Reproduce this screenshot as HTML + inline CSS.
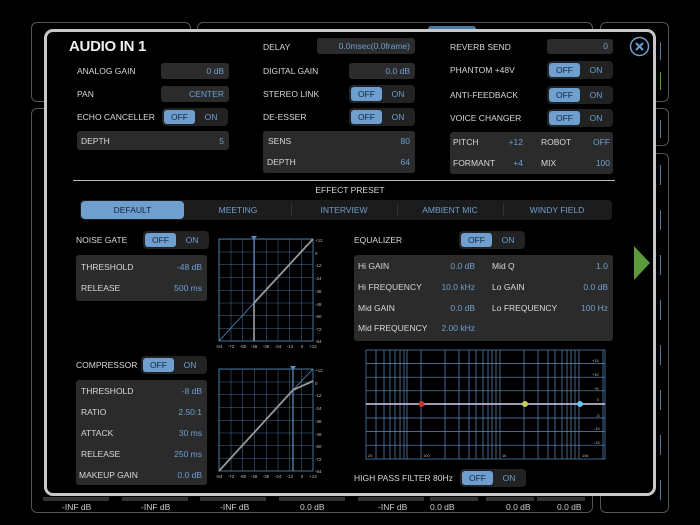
<!DOCTYPE html>
<html><head><meta charset="utf-8"><style>
*{margin:0;padding:0;box-sizing:border-box}
body{width:700px;height:525px;background:#000;position:relative;overflow:hidden;font-family:"Liberation Sans",sans-serif;color:#ddd;font-size:8.5px}
.a{position:absolute}
.lb{position:absolute;color:#d8d8d8;font-size:8.5px;line-height:10px;white-space:nowrap}
.bx{position:absolute;background:#2b2b2b;border-radius:3px;color:#6f9fd0;font-size:8.5px;text-align:right;padding-right:5px}
.v{position:absolute;color:#6f9fd0;font-size:8.5px;line-height:10px;white-space:nowrap;text-align:right}
.tg{position:absolute;background:#222;border-radius:4px;height:18px;width:66px}
.tg .off{position:absolute;left:2px;top:2px;width:31px;height:14px;background:#6e9fcf;border-radius:3px;color:#12263a;text-align:center;line-height:14px;font-size:8.5px}
.tg .on{position:absolute;right:2px;top:2px;width:30px;height:14px;color:#6f9fd0;text-align:center;line-height:14px;font-size:8.5px}
.pn{position:absolute;background:#2b2b2b;border-radius:3px}
.bg{position:absolute;border:1.5px solid #555;border-radius:6px}
.bar{position:absolute;top:497px;height:4px;background:#333}
</style></head><body>
<!-- background panels -->
<div class="bg" style="left:31px;top:22px;width:160px;height:80px"></div>
<div class="bg" style="left:197px;top:22px;width:396px;height:80px"></div>
<div class="a" style="left:428px;top:26px;width:48px;height:6px;background:#4a7aa5;border-radius:3px"></div>
<div class="bg" style="left:600px;top:22px;width:69px;height:80px"></div>
<div class="bg" style="left:600px;top:108px;width:69px;height:38px"></div>
<div class="bg" style="left:600px;top:153px;width:69px;height:360px"></div>
<div class="bg" style="left:31px;top:108px;width:562px;height:405px"></div>
<div class="a" style="left:660px;top:42px;width:1px;height:18px;background:#4d7a9e"></div>
<div class="a" style="left:660px;top:72px;width:1px;height:18px;background:#5a9a3a"></div>
<div class="a" style="left:660px;top:120px;width:1px;height:18px;background:#4d7a9e"></div>
<div class="a" style="left:660px;top:165px;width:1px;height:340px;background:repeating-linear-gradient(#4d7a9e 0 20px,transparent 20px 45px)"></div>
<div class="bar" style="left:43px;width:66px"></div>
<div class="bar" style="left:122px;width:66px"></div>
<div class="bar" style="left:200px;width:66px"></div>
<div class="bar" style="left:279px;width:66px"></div>
<div class="bar" style="left:358px;width:66px"></div>
<div class="bar" style="left:430px;width:48px"></div>
<div class="bar" style="left:486px;width:48px"></div>
<div class="bar" style="left:537px;width:48px"></div>
<div class="a" style="left:0;top:502px;width:600px;height:12px;color:#ccc;font-size:8.5px">
<span class="a" style="left:62px">-INF dB</span><span class="a" style="left:141px">-INF dB</span><span class="a" style="left:220px">-INF dB</span><span class="a" style="left:300px">0.0 dB</span><span class="a" style="left:378px">-INF dB</span><span class="a" style="left:430px">0.0 dB</span><span class="a" style="left:506px">0.0 dB</span><span class="a" style="left:557px">0.0 dB</span></div>
<!-- modal -->
<div class="a" style="left:44px;top:29px;width:612px;height:467px;background:#000;border:3px solid #c8c8c8;border-radius:9px"></div>
<div class="a" style="left:69px;top:38px;font-size:15px;font-weight:bold;color:#eee;letter-spacing:-0.3px">AUDIO IN 1</div>
<svg class="a" style="left:629px;top:36px" width="21" height="21"><circle cx="10.5" cy="10.5" r="9" fill="none" stroke="#6f9fd0" stroke-width="1.5"/><path d="M7 7L14 14M14 7L7 14" stroke="#6f9fd0" stroke-width="2"/></svg>

<div class="lb" style="left:77px;top:66px">ANALOG GAIN</div><div class="bx" style="left:161px;top:63px;width:68px;height:16px;line-height:16px">0 dB</div>
<div class="lb" style="left:77px;top:89px">PAN</div><div class="bx" style="left:161px;top:86px;width:68px;height:16px;line-height:16px">CENTER</div>
<div class="lb" style="left:77px;top:112px">ECHO CANCELLER</div><div class="tg" style="left:162px;top:108px"><div class="off">OFF</div><div class="on">ON</div></div>
<div class="pn" style="left:77px;top:131px;width:152px;height:19px"></div>
<div class="lb" style="left:81px;top:136px">DEPTH</div><div class="v" style="left:200px;top:136px;width:24px">5</div>

<div class="lb" style="left:263px;top:42px">DELAY</div><div class="bx" style="left:317px;top:38px;width:98px;height:16px;line-height:16px">0.0msec(0.0frame)</div>
<div class="lb" style="left:263px;top:66px">DIGITAL GAIN</div><div class="bx" style="left:349px;top:63px;width:66px;height:16px;line-height:16px">0.0 dB</div>
<div class="lb" style="left:263px;top:89px">STEREO LINK</div><div class="tg" style="left:349px;top:85px"><div class="off">OFF</div><div class="on">ON</div></div>
<div class="lb" style="left:263px;top:112px">DE-ESSER</div><div class="tg" style="left:349px;top:108px"><div class="off">OFF</div><div class="on">ON</div></div>
<div class="pn" style="left:263px;top:131px;width:152px;height:42px"></div>
<div class="lb" style="left:268px;top:136px">SENS</div><div class="v" style="left:380px;top:136px;width:30px">80</div>
<div class="lb" style="left:267px;top:157px">DEPTH</div><div class="v" style="left:380px;top:157px;width:30px">64</div>

<div class="lb" style="left:450px;top:42px">REVERB SEND</div><div class="bx" style="left:547px;top:39px;width:66px;height:15px;line-height:15px">0</div>
<div class="lb" style="left:450px;top:65px">PHANTOM +48V</div><div class="tg" style="left:547px;top:61px"><div class="off">OFF</div><div class="on">ON</div></div>
<div class="lb" style="left:450px;top:90px">ANTI-FEEDBACK</div><div class="tg" style="left:547px;top:86px"><div class="off">OFF</div><div class="on">ON</div></div>
<div class="lb" style="left:450px;top:113px">VOICE CHANGER</div><div class="tg" style="left:547px;top:109px"><div class="off">OFF</div><div class="on">ON</div></div>
<div class="pn" style="left:450px;top:132px;width:163px;height:42px"></div>
<div class="lb" style="left:453px;top:137px">PITCH</div><div class="v" style="left:495px;top:137px;width:28px">+12</div>
<div class="lb" style="left:541px;top:137px">ROBOT</div><div class="v" style="left:580px;top:137px;width:30px">OFF</div>
<div class="lb" style="left:453px;top:158px">FORMANT</div><div class="v" style="left:495px;top:158px;width:28px">+4</div>
<div class="lb" style="left:541px;top:158px">MIX</div><div class="v" style="left:580px;top:158px;width:30px">100</div>

<div class="a" style="left:73px;top:180px;width:542px;height:1px;background:#bbb"></div>
<div class="lb" style="left:0;width:700px;text-align:center;top:185px">EFFECT PRESET</div>
<div class="a" style="left:80px;top:200px;width:532px;height:20px;background:#1c1c1c;border-radius:4px"></div>
<div class="a" style="left:81px;top:201px;width:103px;height:18px;background:#6e9fcf;border-radius:4px;color:#12263a;text-align:center;line-height:18px">DEFAULT</div>
<div class="a" style="left:291px;top:204px;width:1px;height:12px;background:#333"></div>
<div class="a" style="left:397px;top:204px;width:1px;height:12px;background:#333"></div>
<div class="a" style="left:503px;top:204px;width:1px;height:12px;background:#333"></div>
<div class="v" style="left:185px;top:205px;width:106px;text-align:center">MEETING</div>
<div class="v" style="left:291px;top:205px;width:106px;text-align:center">INTERVIEW</div>
<div class="v" style="left:397px;top:205px;width:106px;text-align:center">AMBIENT MIC</div>
<div class="v" style="left:503px;top:205px;width:108px;text-align:center">WINDY FIELD</div>

<div class="lb" style="left:76px;top:235px">NOISE GATE</div><div class="tg" style="left:143px;top:231px"><div class="off">OFF</div><div class="on">ON</div></div>
<div class="pn" style="left:76px;top:255px;width:131px;height:46px"></div>
<div class="lb" style="left:81px;top:262px">THRESHOLD</div><div class="v" style="left:160px;top:262px;width:42px">-48 dB</div>
<div class="lb" style="left:81px;top:283px">RELEASE</div><div class="v" style="left:160px;top:283px;width:42px">500 ms</div>

<div class="lb" style="left:76px;top:360px">COMPRESSOR</div><div class="tg" style="left:141px;top:356px"><div class="off">OFF</div><div class="on">ON</div></div>
<div class="pn" style="left:76px;top:380px;width:131px;height:105px"></div>
<div class="lb" style="left:81px;top:386px">THRESHOLD</div><div class="v" style="left:160px;top:386px;width:42px">-8 dB</div>
<div class="lb" style="left:81px;top:407px">RATIO</div><div class="v" style="left:160px;top:407px;width:42px">2.50:1</div>
<div class="lb" style="left:81px;top:428px">ATTACK</div><div class="v" style="left:160px;top:428px;width:42px">30 ms</div>
<div class="lb" style="left:81px;top:449px">RELEASE</div><div class="v" style="left:160px;top:449px;width:42px">250 ms</div>
<div class="lb" style="left:79px;top:470px">MAKEUP GAIN</div><div class="v" style="left:160px;top:470px;width:42px">0.0 dB</div>

<svg class="a" style="left:0;top:0" width="700" height="525" font-family="Liberation Sans" font-size="4.5" fill="#bbb">
<defs><pattern id="g" x="219" y="239" width="11.75" height="12.75" patternUnits="userSpaceOnUse"><path d="M0 0H11.75M0 0V12.75" stroke="#5b8fc0" stroke-width="0.8" fill="none"/></pattern>
<pattern id="g2" x="219" y="369" width="11.75" height="12.75" patternUnits="userSpaceOnUse"><path d="M0 0H11.75M0 0V12.75" stroke="#5b8fc0" stroke-width="0.8" fill="none"/></pattern></defs>
<rect x="219" y="239" width="94" height="102" fill="url(#g)" stroke="#5b8fc0" stroke-width="0.8"/>
<path d="M219 341L254 303" stroke="#5b8fc0" stroke-width="0.8"/>
<path d="M254 239V341" stroke="#5b8fc0" stroke-width="1.2"/>
<path d="M254 303V341" stroke="#999" stroke-width="1.5"/>
<path d="M254 303L313 239" stroke="#999" stroke-width="1.8"/>
<path d="M251 236h6l-3 4z" fill="#5b8fc0"/>
<g text-anchor="start"><text x="315" y="242">+12</text><text x="315" y="255">0</text><text x="315" y="267">-12</text><text x="315" y="280">-24</text><text x="315" y="293">-36</text><text x="315" y="306">-48</text><text x="315" y="318">-60</text><text x="315" y="331">-72</text><text x="315" y="343">-84</text></g>
<g text-anchor="middle"><text x="219" y="348">-84</text><text x="231" y="348">-72</text><text x="243" y="348">-60</text><text x="254" y="348">-48</text><text x="266" y="348">-36</text><text x="278" y="348">-24</text><text x="290" y="348">-12</text><text x="302" y="348">0</text><text x="313" y="348">+12</text></g>

<rect x="219" y="369" width="94" height="102" fill="url(#g2)" stroke="#5b8fc0" stroke-width="0.8"/>
<path d="M293 369V471" stroke="#5b8fc0" stroke-width="1.2"/>
<path d="M293 390L313 369" stroke="#5b8fc0" stroke-width="0.8"/>
<path d="M219 471L293 390L313 381" stroke="#999" stroke-width="1.8" fill="none"/>
<path d="M290 366h6l-3 4z" fill="#5b8fc0"/>
<g text-anchor="start"><text x="315" y="372">+12</text><text x="315" y="385">0</text><text x="315" y="397">-12</text><text x="315" y="410">-24</text><text x="315" y="423">-36</text><text x="315" y="436">-48</text><text x="315" y="448">-60</text><text x="315" y="461">-72</text><text x="315" y="473">-84</text></g>
<g text-anchor="middle"><text x="219" y="478">-84</text><text x="231" y="478">-72</text><text x="243" y="478">-60</text><text x="254" y="478">-48</text><text x="266" y="478">-36</text><text x="278" y="478">-24</text><text x="290" y="478">-12</text><text x="302" y="478">0</text><text x="313" y="478">+12</text></g>

<!-- EQ graph -->
<g stroke="#5b8fc0" stroke-width="0.7" fill="none">
<rect x="366" y="350" width="239" height="109"/>
<path d="M366 363.6H605M366 377.2H605M366 390.8H605M366 418H605M366 431.6H605M366 445.2H605"/>
<path d="M376 350V459M384 350V459M390 350V459M395 350V459M400 350V459M404 350V459M407 350V459M421 350V459M445 350V459M459 350V459M469 350V459M476 350V459M483 350V459M488 350V459M492 350V459M496 350V459M500 350V459M524 350V459M538 350V459M548 350V459M555 350V459M562 350V459M567 350V459M571 350V459M575 350V459M579 350V459M603 350V459"/>
</g>
<path d="M366 404H605" stroke="#dccaf0" stroke-width="1.5"/>
<circle cx="421.5" cy="404" r="3" fill="#c8352e"/>
<circle cx="525" cy="404" r="3" fill="#c8cc50"/>
<circle cx="580" cy="404" r="3" fill="#5ec8f0"/>
<g font-size="4"><text x="592" y="362">+15</text><text x="592" y="376">+10</text><text x="594" y="390">+5</text><text x="597" y="401">0</text><text x="596" y="417">-5</text><text x="594" y="430">-10</text><text x="594" y="444">-15</text>
<text x="368" y="457">20</text><text x="423" y="457">100</text><text x="502" y="457">1k</text><text x="582" y="457">10k</text></g>
<path d="M634 246L650 263L634 280Z" fill="#5c9a3c"/>
</svg>

<div class="lb" style="left:354px;top:235px">EQUALIZER</div><div class="tg" style="left:459px;top:231px"><div class="off">OFF</div><div class="on">ON</div></div>
<div class="pn" style="left:354px;top:255px;width:259px;height:86px"></div>
<div class="lb" style="left:358px;top:261px">Hi GAIN</div><div class="v" style="left:430px;top:261px;width:45px">0.0 dB</div>
<div class="lb" style="left:358px;top:282px">Hi FREQUENCY</div><div class="v" style="left:430px;top:282px;width:45px">10.0 kHz</div>
<div class="lb" style="left:358px;top:303px">Mid GAIN</div><div class="v" style="left:430px;top:303px;width:45px">0.0 dB</div>
<div class="lb" style="left:358px;top:323px">Mid FREQUENCY</div><div class="v" style="left:430px;top:323px;width:45px">2.00 kHz</div>
<div class="lb" style="left:492px;top:261px">Mid Q</div><div class="v" style="left:565px;top:261px;width:43px">1.0</div>
<div class="lb" style="left:492px;top:282px">Lo GAIN</div><div class="v" style="left:565px;top:282px;width:43px">0.0 dB</div>
<div class="lb" style="left:492px;top:303px">Lo FREQUENCY</div><div class="v" style="left:565px;top:303px;width:43px">100 Hz</div>

<div class="lb" style="left:354px;top:473px">HIGH PASS FILTER 80Hz</div><div class="tg" style="left:460px;top:469px"><div class="off">OFF</div><div class="on">ON</div></div>
</body></html>
